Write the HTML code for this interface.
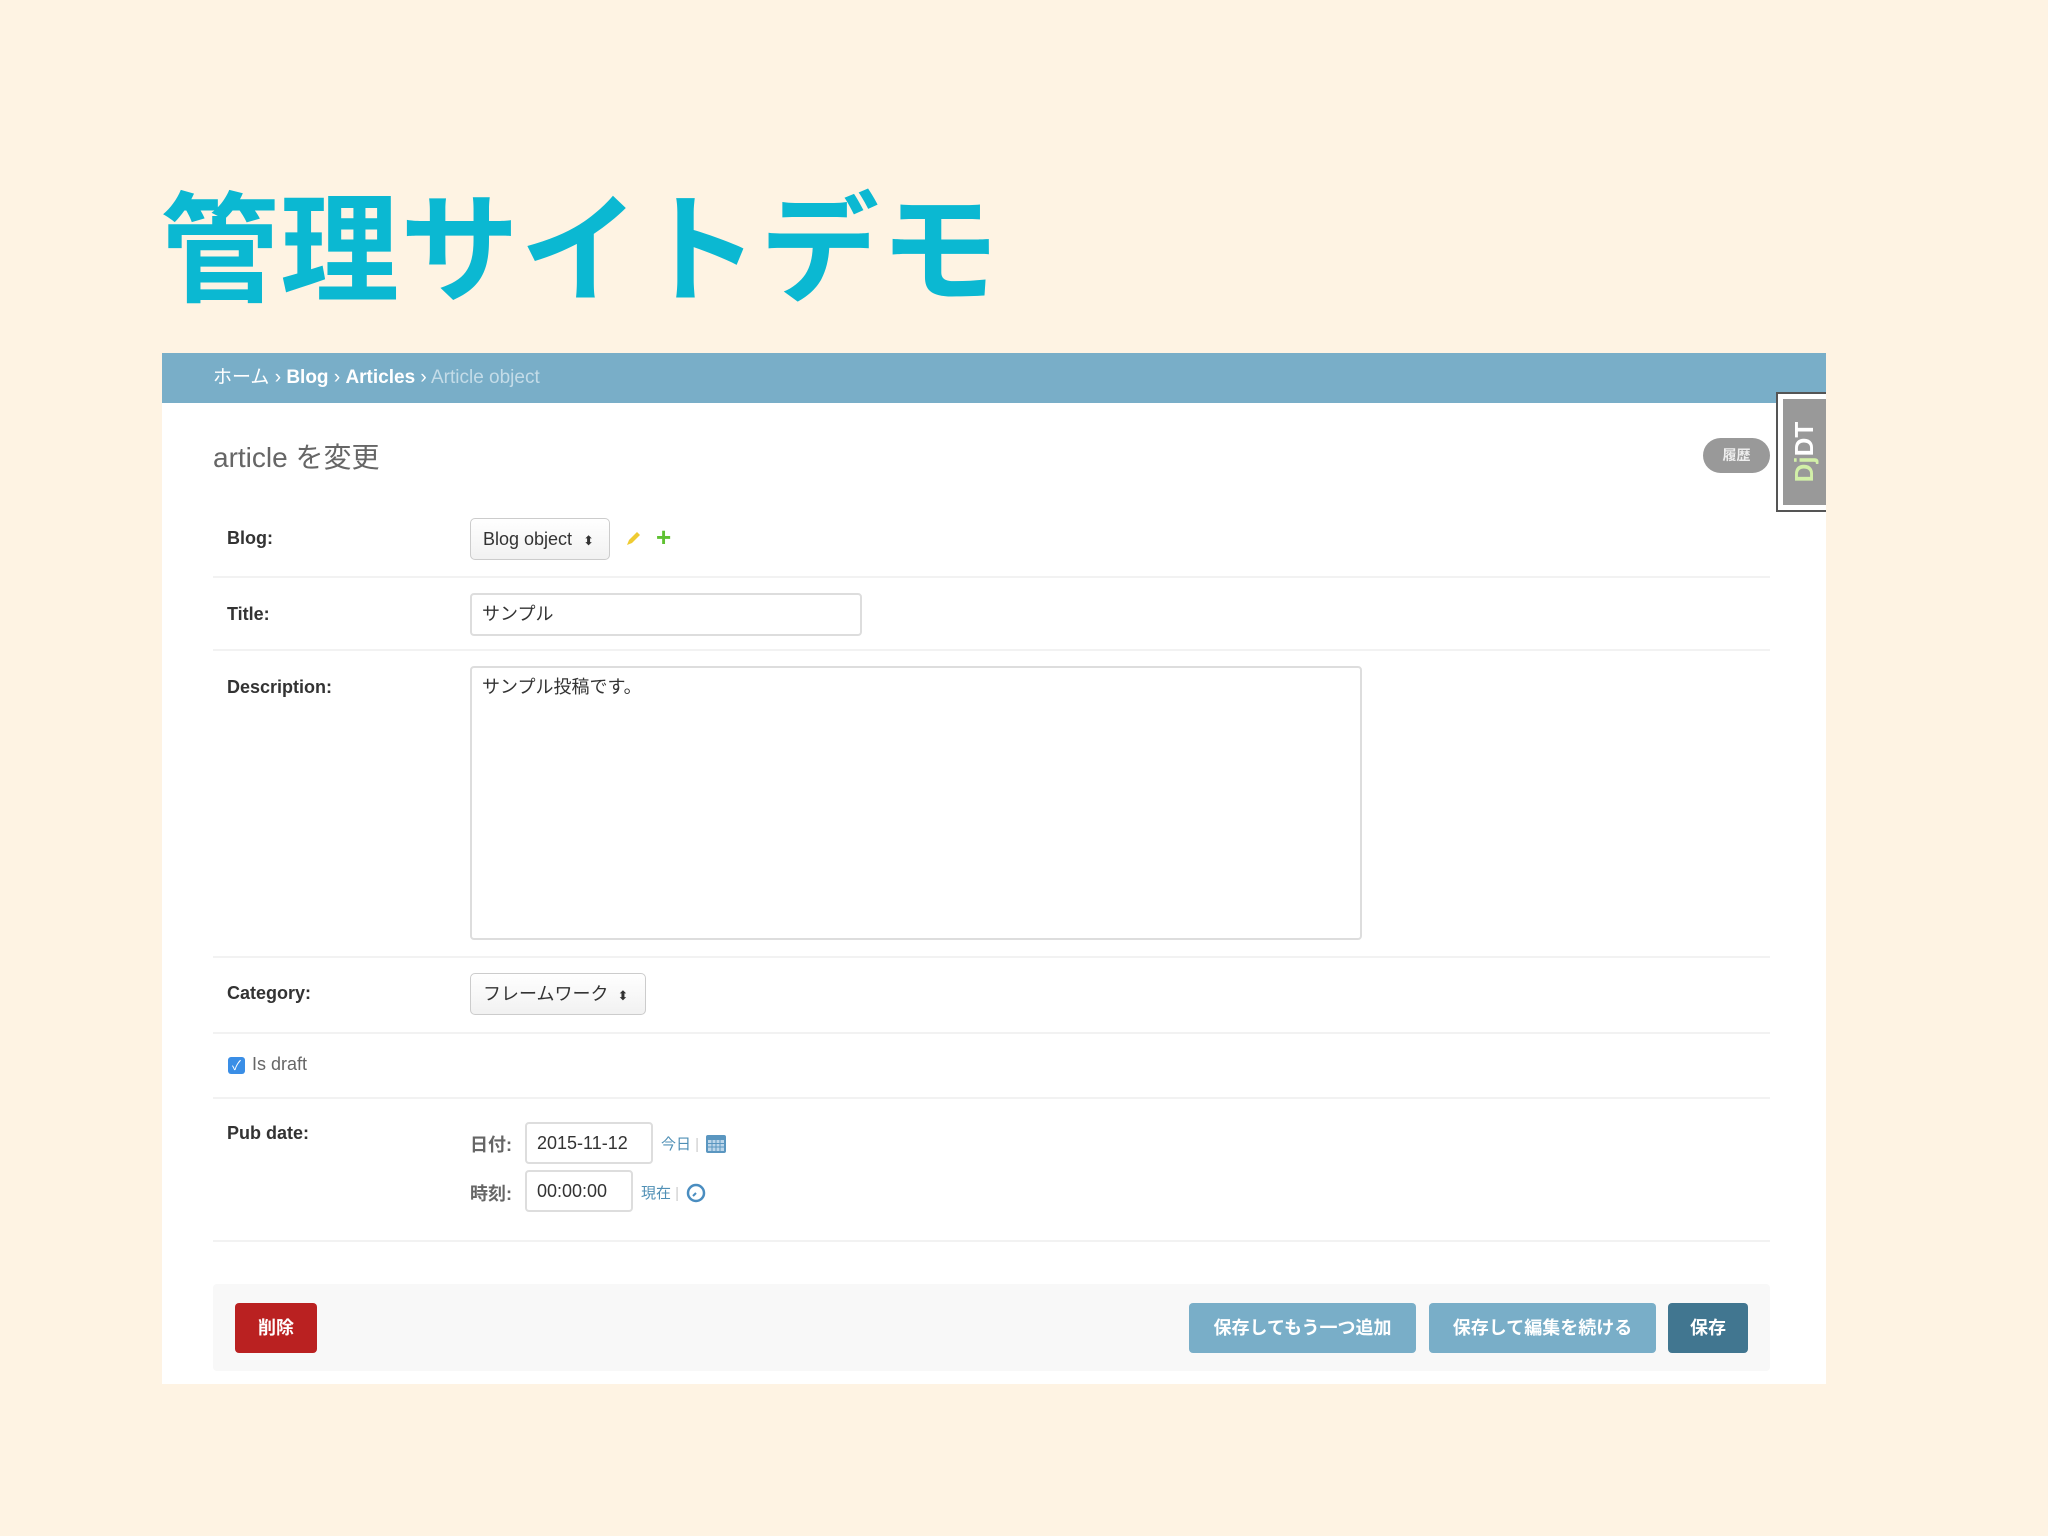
<!DOCTYPE html>
<html><head><meta charset="utf-8"><style>
*{margin:0;padding:0;box-sizing:border-box}
body{width:2048px;height:1536px;background:#fef3e3;position:relative;overflow:hidden;font-family:"Liberation Sans","Noto Sans CJK JP",sans-serif}
.a{position:absolute}
h1{position:absolute;left:160px;top:171px;font-size:119px;line-height:140px;color:#0bb8d2;font-weight:bold;letter-spacing:1px;font-family:"Noto Sans CJK JP",sans-serif}
.panel{left:162px;top:353px;width:1664px;height:1031px;background:#fff}
.hdr{left:162px;top:353px;width:1664px;height:50px;background:#79aec8;color:#fff;font-size:19px;line-height:50px;padding-left:51px}
.hdr b{font-weight:bold}
.hdr .g{color:#c4dce8}
.lbl{font-size:18px;font-weight:bold;color:#333;left:227px}
.sep{left:213px;width:1557px;height:2px;background:#f2f2f2}
.in{border:2px solid #ddd;border-radius:4px;background:#fff;font-size:18px;color:#333;padding-left:10px}
.sel{border:1px solid #ccc;border-radius:5px;background:linear-gradient(#fff,#f1f1f1);font-size:18px;color:#333;padding-left:12px}
.btn{border-radius:4px;color:#fff;font-size:18px;text-align:center;line-height:50px;font-weight:bold}
.lk{color:#4f8fb5;font-size:15px}
</style></head><body>
<h1>管理サイトデモ</h1>
<div class="a panel"></div>
<div class="a hdr">ホーム › <b>Blog</b> › <b>Articles</b> › <span class="g">Article object</span></div>
<div class="a" style="left:213px;top:436px;font-size:28px;color:#666">article を変更</div>
<div class="a" style="left:1703px;top:438px;width:67px;height:35px;border-radius:18px;background:#999;color:#eee;font-size:14px;text-align:center;line-height:35px;font-weight:bold">履歴</div>
<div class="a" style="left:1776px;top:392px;width:50px;height:120px;background:#fff;border:2px solid #555;border-right:none"></div>
<div class="a" style="left:1783px;top:399px;width:43px;height:106px;background:#999"></div>
<div class="a" style="font-size:26px;font-weight:bold;transform:rotate(-90deg);color:#fff;white-space:nowrap;line-height:30px;text-align:center;width:106px;left:1751px;top:437px"><span style="color:#d2f0a8">Dj</span>DT</div>

<div class="a lbl" style="top:528px">Blog:</div>
<div class="a sel" style="left:470px;top:518px;width:140px;height:42px;line-height:40px">Blog object <span style="font-size:13px;margin-left:6px">⬍</span></div>
<svg class="a" style="left:624px;top:530px" width="18" height="18" viewBox="0 0 18 18"><path d="M3 15 L5 10 L13 2 L16 5 L8 13 Z" fill="#efcb32"/></svg>
<div class="a" style="left:656px;top:522px;color:#5fc132;font-size:26px;font-weight:bold">+</div>
<div class="a sep" style="top:576px"></div>

<div class="a lbl" style="top:604px">Title:</div>
<div class="a in" style="left:470px;top:593px;width:392px;height:43px;line-height:39px">サンプル</div>
<div class="a sep" style="top:649px"></div>

<div class="a lbl" style="top:677px">Description:</div>
<div class="a in" style="left:470px;top:666px;width:892px;height:274px;padding-top:8px;line-height:22px">サンプル投稿です。</div>
<div class="a sep" style="top:956px"></div>

<div class="a lbl" style="top:983px">Category:</div>
<div class="a sel" style="left:470px;top:973px;width:176px;height:42px;line-height:40px">フレームワーク <span style="font-size:13px;margin-left:4px">⬍</span></div>
<div class="a sep" style="top:1032px"></div>

<div class="a" style="left:228px;top:1057px;width:17px;height:17px;border-radius:3px;background:#3a8ee6;color:#fff;font-size:13px;text-align:center;line-height:17px">✓</div>
<div class="a" style="left:252px;top:1054px;font-size:18px;color:#666">Is draft</div>
<div class="a sep" style="top:1097px"></div>

<div class="a lbl" style="top:1123px">Pub date:</div>
<div class="a" style="left:470px;top:1131px;font-size:18px;color:#666;font-weight:bold">日付:</div>
<div class="a in" style="left:525px;top:1122px;width:128px;height:42px;line-height:38px">2015-11-12</div>
<div class="a lk" style="left:661px;top:1133px">今日 <span style="color:#ccc">|</span></div>
<svg class="a" style="left:705px;top:1132px" width="22" height="22" viewBox="0 0 22 22"><rect x="1" y="3" width="20" height="18" rx="2" fill="#5a96c0"/><rect x="3" y="8" width="16" height="11" fill="#bcd6ea"/><path d="M3 11.5h16M3 15h16M7 8v11M11 8v11M15 8v11" stroke="#5a96c0"/></svg>
<div class="a" style="left:470px;top:1180px;font-size:18px;color:#666;font-weight:bold">時刻:</div>
<div class="a in" style="left:525px;top:1170px;width:108px;height:42px;line-height:38px">00:00:00</div>
<div class="a lk" style="left:641px;top:1182px">現在 <span style="color:#ccc">|</span></div>
<svg class="a" style="left:686px;top:1183px" width="20" height="20" viewBox="0 0 20 20"><circle cx="10" cy="10" r="8" fill="none" stroke="#4a8dc0" stroke-width="2.5"/><path d="M10 10 L7 13" stroke="#4a8dc0" stroke-width="2"/></svg>
<div class="a sep" style="top:1240px"></div>

<div class="a" style="left:213px;top:1284px;width:1557px;height:87px;background:#f8f8f8;border-radius:4px"></div>
<div class="a btn" style="left:235px;top:1303px;width:82px;height:50px;background:#ba2121">削除</div>
<div class="a btn" style="left:1189px;top:1303px;width:227px;height:50px;background:#79aec8">保存してもう一つ追加</div>
<div class="a btn" style="left:1429px;top:1303px;width:227px;height:50px;background:#79aec8">保存して編集を続ける</div>
<div class="a btn" style="left:1668px;top:1303px;width:80px;height:50px;background:#417690">保存</div>
</body></html>
